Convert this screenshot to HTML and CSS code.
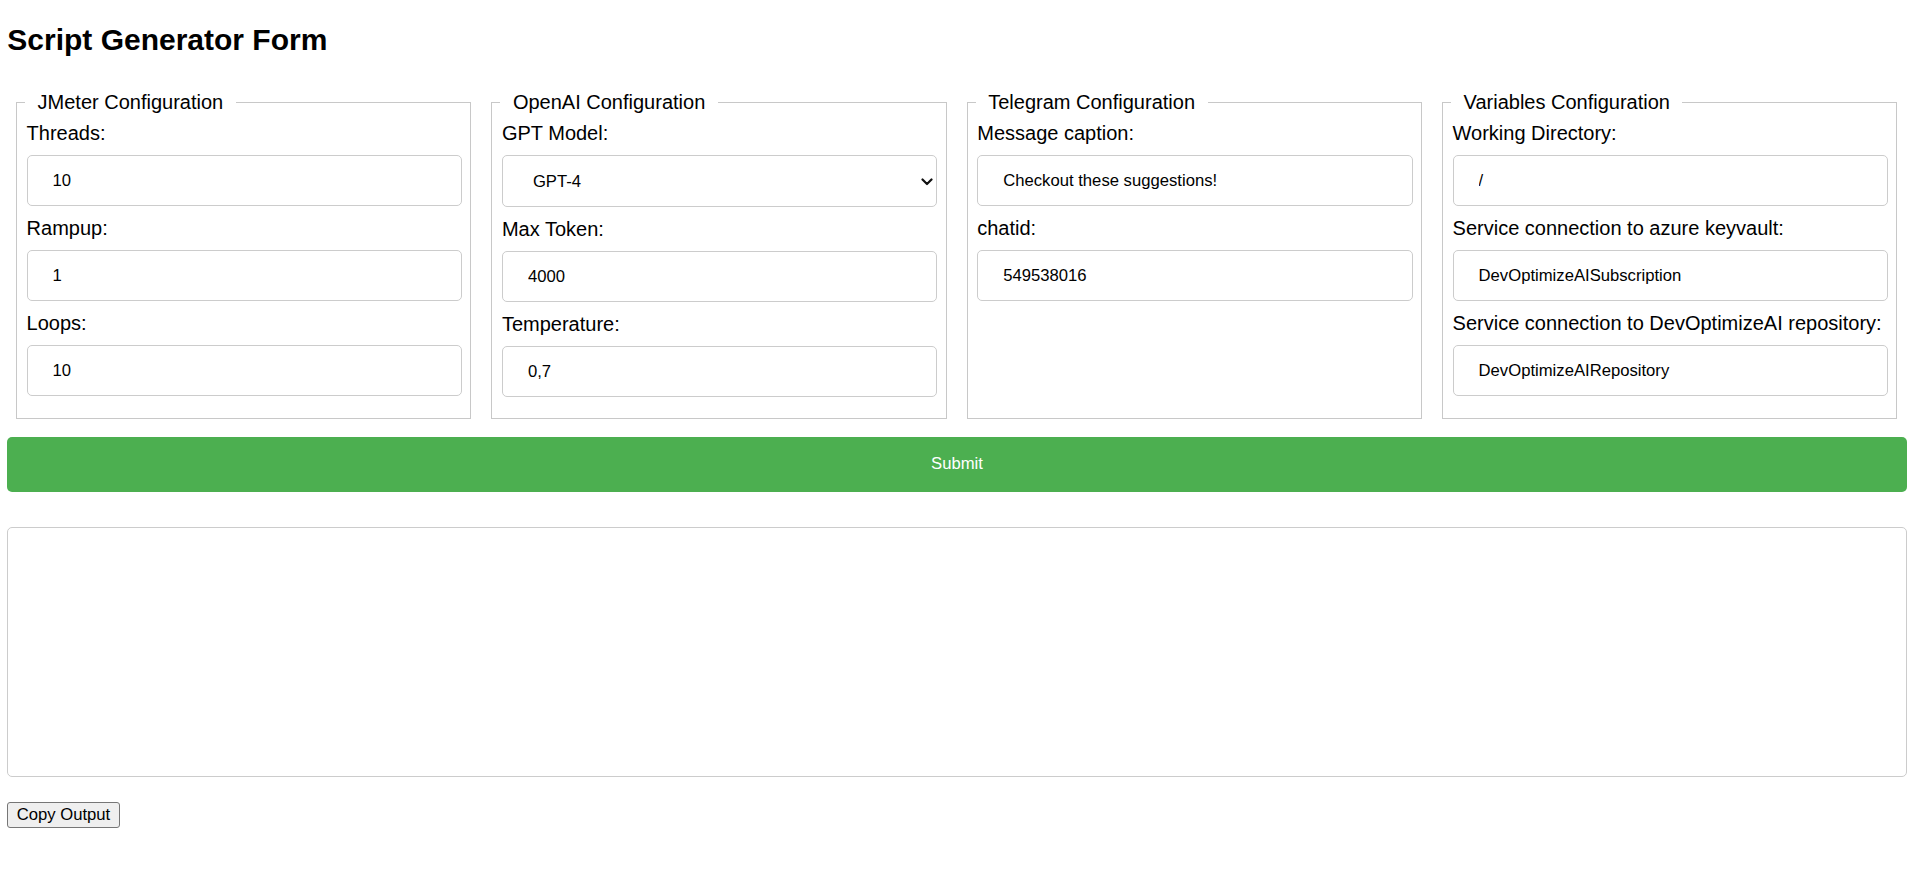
FILE: index.html
```html
<!DOCTYPE html>
<html lang="en">
<head>
<meta charset="utf-8">
<title>Script Generator Form</title>
<link rel="stylesheet" href="styles.css">
</head>
<body>
<div class="page">
  <h1 class="title">Script Generator Form</h1>
  <form class="form">
    <div class="columns">
      <fieldset class="group">
        <legend class="group-title">JMeter Configuration</legend>
        <label class="field-label" for="threads">Threads:</label>
        <input class="field" id="threads" type="text" value="10">
        <label class="field-label" for="rampup">Rampup:</label>
        <input class="field" id="rampup" type="text" value="1">
        <label class="field-label" for="loops">Loops:</label>
        <input class="field" id="loops" type="text" value="10">
      </fieldset>
      <fieldset class="group">
        <legend class="group-title">OpenAI Configuration</legend>
        <label class="field-label" for="model">GPT Model:</label>
        <span class="select-wrap">
          <select class="field select" id="model">
            <option>GPT-4</option>
            <option>GPT-3.5-turbo</option>
          </select>
          <svg class="chevron" width="12" height="8" viewBox="0 0 12 8"><path d="M1.5 1.5 L6 6 L10.5 1.5" fill="none" stroke="#111" stroke-width="2.2" stroke-linecap="round" stroke-linejoin="round"/></svg>
        </span>
        <label class="field-label" for="maxtoken">Max Token:</label>
        <input class="field" id="maxtoken" type="text" value="4000">
        <label class="field-label" for="temperature">Temperature:</label>
        <input class="field" id="temperature" type="text" value="0,7">
      </fieldset>
      <fieldset class="group">
        <legend class="group-title">Telegram Configuration</legend>
        <label class="field-label" for="caption">Message caption:</label>
        <input class="field" id="caption" type="text" value="Checkout these suggestions!">
        <label class="field-label" for="chatid">chatid:</label>
        <input class="field" id="chatid" type="text" value="549538016">
      </fieldset>
      <fieldset class="group">
        <legend class="group-title">Variables Configuration</legend>
        <label class="field-label" for="workdir">Working Directory:</label>
        <input class="field" id="workdir" type="text" value="/">
        <label class="field-label" for="keyvault">Service connection to azure keyvault:</label>
        <input class="field" id="keyvault" type="text" value="DevOptimizeAISubscription">
        <label class="field-label" for="repo">Service connection to DevOptimizeAI repository:</label>
        <input class="field" id="repo" type="text" value="DevOptimizeAIRepository">
      </fieldset>
    </div>
    <button class="submit" type="button">Submit</button>
  </form>
  <textarea class="output" readonly></textarea>
  <button class="copy" type="button">Copy Output</button>
</div>
</body>
</html>
```
FILE: styles.css
```css
html, body {
  margin: 0;
  padding: 0;
  background: #ffffff;
}

body {
  font-family: "Liberation Sans", Arial, sans-serif;
  color: #000;
}

.page {
  width: 1899.4px;
  margin-left: 7.3px;
}

.title {
  font-size: 30px;
  font-weight: bold;
  line-height: normal;
  margin: 23px 0 34.2px 0;
}

.form {
  margin: 0;
}

.columns {
  display: flex;
  gap: 20px;
  padding: 0 9.4px 0 8.7px;
}

.group {
  flex: 1 1 0;
  min-width: 0;
  margin: 0;
  border: 1px solid #c8c8c8;
  padding: 7.5px 8.3px 10px 9.6px;
  display: flex;
  flex-direction: column;
}

.group-title {
  font-size: 20px;
  line-height: normal;
  padding: 0 12.5px;
  margin-left: -1.5px;
}

.field-label {
  display: block;
  font-size: 20px;
  line-height: normal;
}

.field {
  display: block;
  box-sizing: border-box;
  width: 100%;
  height: 51px;
  margin: 10.4px 0 10.7px 0;
  padding: 0 25px;
  border: 1px solid #cccccc;
  border-radius: 5px;
  font-family: "Liberation Sans", Arial, sans-serif;
  font-size: 16.67px;
  color: #000;
  background: #fff;
  outline: none;
}

.select-wrap {
  position: relative;
  display: block;
}

.select {
  appearance: none;
  -webkit-appearance: none;
  height: 52px;
  padding-left: 30px;
}

.chevron {
  position: absolute;
  right: 4px;
  top: 33.5px;
  pointer-events: none;
}

.submit {
  display: block;
  width: 100%;
  height: 55px;
  margin: 17.8px 0 0 0;
  border: none;
  border-radius: 5px;
  background: #4caf50;
  color: #ffffff;
  font-family: "Liberation Sans", Arial, sans-serif;
  font-size: 16.67px;
  cursor: pointer;
}

.output {
  display: block;
  box-sizing: border-box;
  width: 100%;
  height: 249.4px;
  margin: 35.6px 0 0 0;
  border: 1px solid #cccccc;
  border-radius: 5px;
  resize: none;
  background: #fff;
  font-family: "Liberation Mono", monospace;
  outline: none;
}

.copy {
  display: block;
  box-sizing: border-box;
  height: 25.7px;
  width: 112.4px;
  margin: 25.3px 0 0 0;
  padding: 0;
  border: 1px solid #767676;
  border-radius: 3px;
  background: #efefef;
  color: #000;
  font-family: "Liberation Sans", Arial, sans-serif;
  font-size: 16.67px;
}
```
